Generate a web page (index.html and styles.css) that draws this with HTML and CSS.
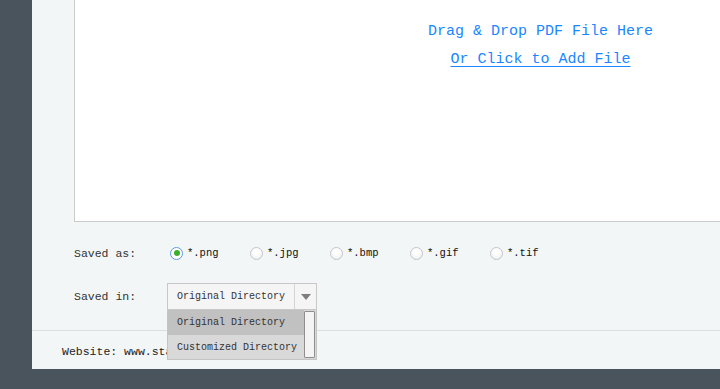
FILE: index.html
```html
<!DOCTYPE html>
<html>
<head>
<meta charset="utf-8">
<link rel="stylesheet" href="styles.css">
</head>
<body>
<div class="panel">
  <div class="drop">
    <p class="drop-title">Drag &amp; Drop PDF File Here</p>
    <a class="drop-link" href="#">Or Click to Add File</a>
  </div>
  <div class="options">
    <div class="row row-as">
      <span class="label">Saved as:</span>
      <div class="radios">
        <label class="radio checked"><span class="dot"></span>*.png</label>
        <label class="radio"><span class="dot"></span>*.jpg</label>
        <label class="radio"><span class="dot"></span>*.bmp</label>
        <label class="radio"><span class="dot"></span>*.gif</label>
        <label class="radio"><span class="dot"></span>*.tif</label>
      </div>
    </div>
    <div class="row row-in">
      <span class="label">Saved in:</span>
      <div class="select">
        <span class="select-value">Original Directory</span>
        <span class="select-arrow"></span>
        <div class="menu">
          <div class="menu-items">
            <div class="menu-item active">Original Directory</div>
            <div class="menu-item">Customized Directory</div>
          </div>
          <div class="scrollbar"><div class="thumb"></div></div>
        </div>
      </div>
    </div>
  </div>
  <div class="footer">Website: www.stapdf.com</div>
</div>
</body>
</html>
```

FILE: styles.css
```css
html, body {
  margin: 0;
  padding: 0;
  overflow: hidden;
  background: #4a545c;
  height: 389px;
}

body {
  font-family: "Liberation Mono", "DejaVu Sans Mono", monospace;
}

.panel {
  margin-left: 32px;
  width: 1100px;
  height: 369px;
  background: #f2f6f7;
  display: flex;
  flex-direction: column;
}

.drop {
  margin-left: 42px;
  width: 932px;
  height: 222px;
  box-sizing: border-box;
  background: #ffffff;
  border-left: 1px solid #cbcbcb;
  border-bottom: 1px solid #cbcbcb;
  display: flex;
  flex-direction: column;
  align-items: center;
  padding-top: 18px;
}

.drop-title {
  margin: 0;
  font-size: 15px;
  line-height: 28px;
  color: #1a86ff;
}

.drop-link {
  font-size: 15px;
  line-height: 28px;
  color: #1a86ff;
  text-decoration: underline;
  text-underline-offset: 3px;
}

.options {
  padding-left: 42px;
  padding-top: 18px;
  padding-bottom: 20px;
  border-bottom: 1px solid #dcdfe1;
  display: flex;
  flex-direction: column;
  gap: 17px;
}

.row {
  display: flex;
  align-items: center;
}

.row-as {
  height: 26px;
}

.row-in {
  height: 27px;
}

.label {
  width: 93px;
  font-size: 11.5px;
  color: #333333;
}

.radios {
  display: flex;
  padding-left: 3px;
}

.radio {
  width: 80px;
  display: flex;
  align-items: center;
  gap: 4px;
  font-size: 10.5px;
  color: #111111;
}

.dot {
  width: 11px;
  height: 11px;
  border-radius: 50%;
  border: 1px solid #c3c8cd;
  background: radial-gradient(circle at 50% 35%, #ffffff 30%, #e6e8ea 100%);
  display: flex;
  align-items: center;
  justify-content: center;
}

.radio.checked .dot {
  border-color: #5c9ce6;
  background: #ffffff;
}

.radio.checked .dot::after {
  content: "";
  width: 6px;
  height: 6px;
  border-radius: 50%;
  background: #3dae2b;
}

.select {
  position: relative;
  width: 150px;
  height: 27px;
  box-sizing: border-box;
  border: 1px solid #c8c8c8;
  background: #f5f5f5;
  display: flex;
  align-items: center;
}

.select-value {
  flex: 1;
  padding-left: 9px;
  font-size: 10px;
  color: #333333;
}

.select-arrow {
  width: 21px;
  height: 100%;
  border-left: 1px solid #d4d4d4;
  display: flex;
  align-items: center;
  justify-content: center;
}

.select-arrow::after {
  content: "";
  border-left: 5px solid transparent;
  border-right: 5px solid transparent;
  border-top: 6px solid #7e7e7e;
}

.menu {
  position: absolute;
  top: 26px;
  left: -1px;
  width: 150px;
  height: 50px;
  box-sizing: border-box;
  border: 1px solid #c4c4c4;
  border-top: none;
  background: #d9d9d9;
  display: flex;
}

.menu-items {
  flex: 1;
  display: flex;
  flex-direction: column;
}

.menu-item {
  height: 24px;
  display: flex;
  align-items: center;
  padding-left: 9px;
  font-size: 10px;
  color: #333333;
  background: #d9d9d9;
}

.menu-item.active {
  height: 25px;
  background: #c1c1c1;
}

.scrollbar {
  width: 12px;
  background: #d9d9d9;
  display: flex;
  padding: 1px 1px 1px 0;
  box-sizing: border-box;
}

.thumb {
  flex: 1;
  border: 1px solid #8e8e8e;
  border-radius: 1px;
  background: #f4f4f4;
}

.footer {
  flex: 1;
  display: flex;
  align-items: center;
  padding-left: 30px;
  padding-top: 2px;
  font-size: 11.5px;
  color: #222222;
}
```
